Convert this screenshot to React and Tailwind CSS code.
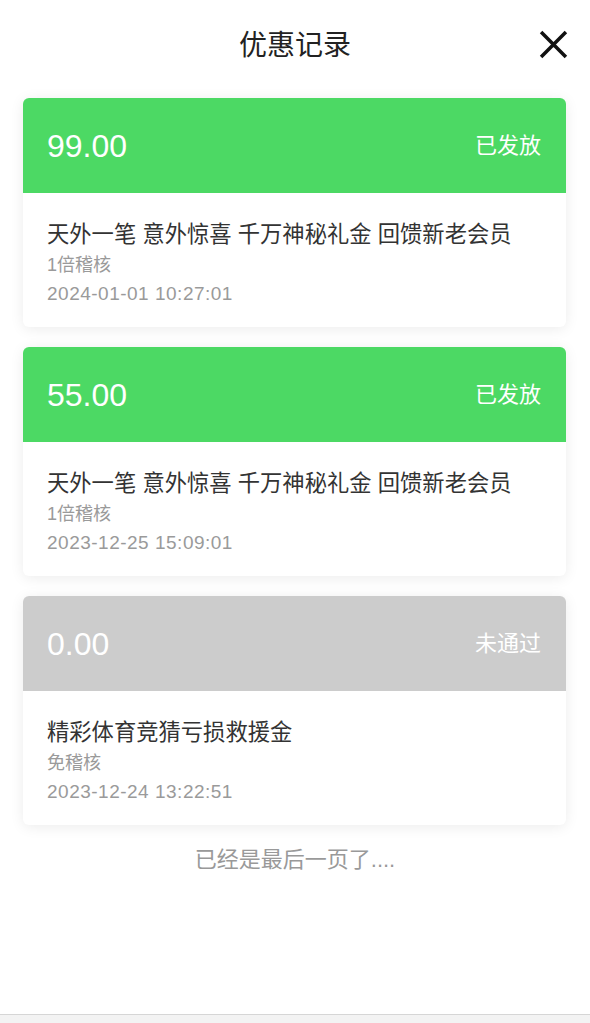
import React from 'react';

const records = [
  {
    amount: '99.00',
    status: '已发放',
    ok: true,
    title: '天外一笔 意外惊喜 千万神秘礼金 回馈新老会员',
    rule: '1倍稽核',
    time: '2024-01-01 10:27:01',
  },
  {
    amount: '55.00',
    status: '已发放',
    ok: true,
    title: '天外一笔 意外惊喜 千万神秘礼金 回馈新老会员',
    rule: '1倍稽核',
    time: '2023-12-25 15:09:01',
  },
  {
    amount: '0.00',
    status: '未通过',
    ok: false,
    title: '精彩体育竞猜亏损救援金',
    rule: '免稽核',
    time: '2023-12-24 13:22:51',
  },
];

const font = { fontFamily: '"Liberation Sans", "Noto Sans CJK SC", sans-serif' };

const RecordCard = ({ item }) => (
  <div className="rounded-[6px] bg-white shadow-[0_2px_14px_rgba(0,0,0,0.08)] overflow-hidden">
    {/* 头部：金额 + 状态 */}
    <div
      className={
        'flex items-center justify-between h-[95px] pl-[24px] pr-[25px] text-white ' +
        (item.ok ? 'bg-[#4cd964]' : 'bg-[#cccccc]')
      }
    >
      <span className="text-[32px] leading-none">{item.amount}</span>
      <span className="text-[22px] leading-none">{item.status}</span>
    </div>
    <div className="px-[24px] pt-[27px] pb-[19px]">
      <div className="text-[22.3px] leading-[30px] text-[#333333]">{item.title}</div>
      <div className="text-[18px] leading-[30px] text-[#9a9a9a]">{item.rule}</div>
      <div className="text-[19px] leading-[28px] tracking-[0.5px] text-[#9a9a9a]">{item.time}</div>
    </div>
  </div>
);

const App = () => {
  return (
    <div className="min-h-screen flex flex-col bg-white" style={font}>
      <div className="flex-1">
        {/* 标题栏 */}
        <div className="relative flex items-center justify-center h-[88px] pt-[3px]">
          <h1 className="text-[28px] leading-none text-[#222222]">优惠记录</h1>
          <button className="absolute right-[22px] top-[30px] w-[29px] h-[29px]">
            <svg viewBox="0 0 28 28" className="w-full h-full">
              <path d="M2 2 L26 26 M26 2 L2 26" stroke="#111111" strokeWidth="3.4" fill="none" />
            </svg>
          </button>
        </div>

        <div className="pl-[23px] pr-[24px] pt-[10px] flex flex-col gap-[20px]">
          {records.map((r, i) => (
            <RecordCard key={i} item={r} />
          ))}
        </div>

        <div className="mt-[20px] text-center text-[22px] leading-[30px] text-[#999999]">
          已经是最后一页了....
        </div>
      </div>

      <div className="h-[9px] border-t border-[#d6d6d6] bg-[#f3f3f3]" />
    </div>
  );
};

export default App;
